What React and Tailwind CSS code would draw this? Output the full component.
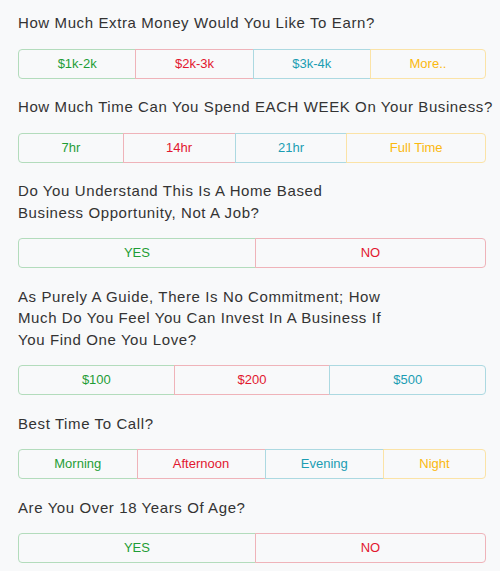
const COLORS = {
  green: 'text-[#1f9d36] border-[#b3dcbc]',
  red: 'text-[#e2172f] border-[#efb3b9]',
  teal: 'text-[#1b9db3] border-[#acd9e1]',
  yellow: 'text-[#fbb80f] border-[#fbe3a6]',
};

const questions = [
  {
    label: ['How Much Extra Money Would You Like To Earn?'],
    options: [
      ['$1k-2k', 'green'],
      ['$2k-3k', 'red'],
      ['$3k-4k', 'teal'],
      ['More..', 'yellow'],
    ],
  },
  {
    label: ['How Much Time Can You Spend EACH WEEK On Your Business?'],
    options: [
      ['7hr', 'green'],
      ['14hr', 'red'],
      ['21hr', 'teal'],
      ['Full Time', 'yellow'],
    ],
  },
  {
    label: ['Do You Understand This Is A Home Based', 'Business Opportunity, Not A Job?'],
    options: [
      ['YES', 'green'],
      ['NO', 'red'],
    ],
  },
  {
    label: [
      'As Purely A Guide, There Is No Commitment; How',
      'Much Do You Feel You Can Invest In A Business If',
      'You Find One You Love?',
    ],
    options: [
      ['$100', 'green'],
      ['$200', 'red'],
      ['$500', 'teal'],
    ],
  },
  {
    label: ['Best Time To Call?'],
    options: [
      ['Morning', 'green'],
      ['Afternoon', 'red'],
      ['Evening', 'teal'],
      ['Night', 'yellow'],
    ],
  },
  {
    label: ['Are You Over 18 Years Of Age?'],
    options: [
      ['YES', 'green'],
      ['NO', 'red'],
    ],
  },
];

export default function App() {
  return (
    <div className="min-h-[571px] bg-[#f8f9fa] pl-[18px] pr-[14px] pt-3 font-['Liberation_Sans',Arial,sans-serif]">
      {questions.map((q, i) => (
        <div key={i} className={i > 0 ? 'mt-[17.5px]' : ''}>
          <p className="text-[15px] leading-[21.5px] tracking-[0.6px] text-[#333] whitespace-nowrap">
            {q.label.map((line, j) => (
              <span key={j} className="block">{line}</span>
            ))}
          </p>
          <div className="mt-[15px] flex">
            {q.options.map(([text, color], j) => (
              <button
                key={j}
                className={`flex-auto h-[30px] border bg-transparent text-[13px] ${COLORS[color]} ${
                  j === 0 ? 'rounded-l' : '-ml-px'
                } ${j === q.options.length - 1 ? 'rounded-r' : ''}`}
              >
                {text}
              </button>
            ))}
          </div>
        </div>
      ))}
    </div>
  );
}
